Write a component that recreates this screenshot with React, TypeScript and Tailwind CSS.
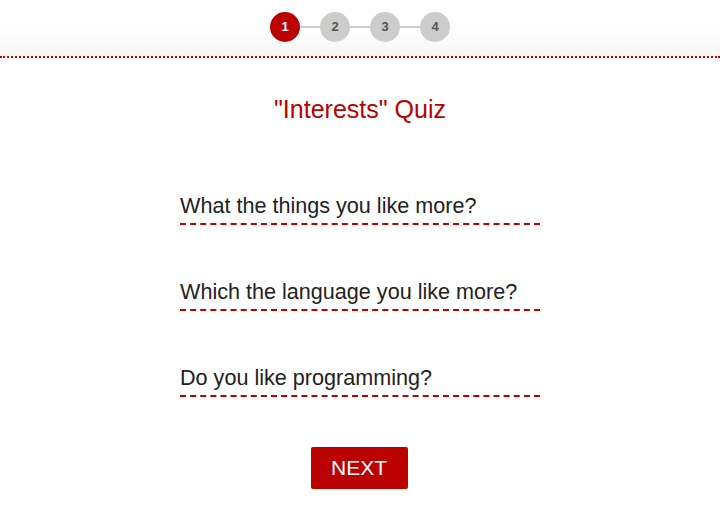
const steps = [1, 2, 3, 4]

const questions = [
  'What the things you like more?',
  'Which the language you like more?',
  'Do you like programming?',
]

export default function App() {
  return (
    <div className="min-h-screen bg-white font-['Liberation_Sans',Arial,sans-serif] text-[#222]">
      <div className="flex items-center justify-center border-b-2 border-dotted border-[#bb0000] bg-gradient-to-b from-white from-50% to-[#f6f6f6] pb-[14px] pt-3">
        {steps.map((s, i) => (
          <div key={s} className="flex items-center">
            {i > 0 && <div className="h-[2px] w-5 bg-[#cccccc]"></div>}
            <div
              className={`flex h-[30px] w-[30px] items-center justify-center rounded-full text-[13px] font-bold ${
                i === 0 ? 'bg-[#bb0000] text-white' : 'bg-[#cccccc] text-[#555]'
              }`}
            >
              {s}
            </div>
          </div>
        ))}
      </div>

      <h1 className="mt-[37px] text-center text-[25px] leading-[28px] text-[#bb0000]">
        "Interests" Quiz
      </h1>

      <div className="mt-[71px] flex flex-col items-center gap-[55px]">
        {questions.map((q) => (
          <div
            key={q}
            className="w-[360px] border-b-2 border-dashed border-[#bb0000] pb-[5px] text-[21.6px] leading-[24px]"
          >
            {q}
          </div>
        ))}
      </div>

      <div className="mt-[51px] flex justify-center">
        <button className="-ml-[2px] -mt-[1px] h-[42px] w-[97px] rounded-[2px] bg-[#bb0000] text-[21px] text-white">
          NEXT
        </button>
      </div>
    </div>
  )
}
